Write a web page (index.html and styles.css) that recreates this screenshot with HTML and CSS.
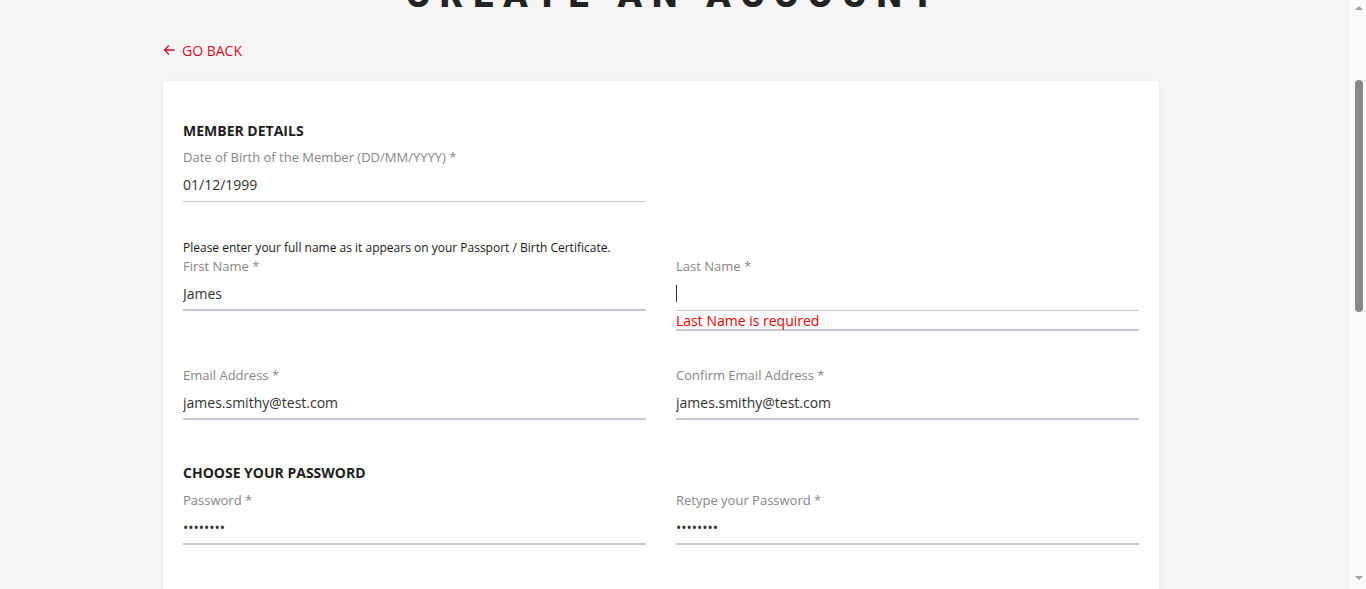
FILE: index.html
```html
<!DOCTYPE html>
<html lang="en">
<head>
<meta charset="utf-8">
<title>Create an Account</title>
<link rel="stylesheet" href="styles.css">
</head>
<body>
<div class="viewport">
  <main class="page">
    <div class="inner">
      <h1 class="title">CREATE AN ACCOUNT</h1>
      <a class="back" href="#">
        <svg class="back-icon" width="12" height="10" viewBox="0 0 12 10" aria-hidden="true">
          <path d="M11 5H1.5M5.5 1L1.5 5l4 4" fill="none" stroke="currentColor" stroke-width="1.4" stroke-linecap="round" stroke-linejoin="round"/>
        </svg>
        <span>GO BACK</span>
      </a>
      <section class="card">
        <h2 class="section-title">MEMBER DETAILS</h2>
        <div class="row">
          <div class="field">
            <label class="label">Date of Birth of the Member (DD/MM/YYYY) *</label>
            <input class="input input-thin" type="text" value="01/12/1999">
          </div>
          <div></div>
        </div>

        <p class="note">Please enter your full name as it appears on your Passport / Birth Certificate.</p>
        <div class="row">
          <div class="field">
            <label class="label">First Name *</label>
            <input class="input" type="text" value="James">
          </div>
          <div class="field">
            <label class="label">Last Name *</label>
            <div class="input input-error"><span class="caret"></span></div>
            <div class="error">Last Name is required</div>
          </div>
        </div>

        <div class="row row-email">
          <div class="field">
            <label class="label">Email Address *</label>
            <input class="input" type="text" value="james.smithy@test.com">
          </div>
          <div class="field">
            <label class="label">Confirm Email Address *</label>
            <input class="input" type="text" value="james.smithy@test.com">
          </div>
        </div>

        <h2 class="section-title section-password">CHOOSE YOUR PASSWORD</h2>
        <div class="row row-password">
          <div class="field">
            <label class="label">Password *</label>
            <input class="input" type="password" value="password">
          </div>
          <div class="field">
            <label class="label">Retype your Password *</label>
            <input class="input" type="password" value="password">
          </div>
        </div>
        <div class="card-rest"></div>
      </section>
    </div>
  </main>
  <div class="scrollbar" aria-hidden="true">
    <div class="sb-arrow sb-up"></div>
    <div class="sb-track"><div class="sb-thumb"></div></div>
    <div class="sb-arrow sb-down"></div>
  </div>
</div>
</body>
</html>
```
FILE: styles.css
```css
html, body {
  margin: 0;
  padding: 0;
  height: 100%;
  overflow: hidden;
}
body {
  background: #f5f5f5;
  font-family: "Open Sans", "Noto Sans", sans-serif;
  color: #333;
}
.viewport {
  display: flex;
  height: 589px;
}
.page {
  flex: 1;
  min-width: 0;
}
.inner {
  width: 1024px;
  margin-left: 163px;
}
.title {
  margin: -25px 0 0;
  font-family: "Roboto", "Liberation Sans", sans-serif;
  font-weight: 900;
  font-size: 36px;
  line-height: 40px;
  letter-spacing: 10px;
  text-align: center;
  color: #222;
}
.back {
  display: flex;
  align-items: center;
  gap: 7px;
  margin-top: 25px;
  height: 20px;
  color: #d50f25;
  font-size: 14px;
  text-decoration: none;
  width: max-content;
}
.back-icon { display: block; }
.card {
  margin-top: 21px;
  width: 996px;
  background: #fff;
  border-radius: 3px;
  box-shadow: 0 0 3px rgba(0,0,0,0.06);
  padding: 40px 20px 0;
  box-sizing: border-box;
}
.section-title {
  margin: 0;
  font-size: 14px;
  line-height: 20px;
  font-weight: 700;
  color: #1e1e1e;
}
.row {
  display: grid;
  grid-template-columns: 463px 463px;
  column-gap: 30px;
  align-items: start;
}
.field {
  display: flex;
  flex-direction: column;
}
.section-title + .row { margin-top: 7px; }
.section-title + .row-password { margin-top: 8px; }
.label {
  font-size: 13px;
  line-height: 18px;
  color: #878787;
}
.input {
  display: block;
  box-sizing: border-box;
  width: 100%;
  height: 36px;
  margin: 0;
  padding: 2px 0 0;
  border: 0;
  border-bottom: 2px solid #c4c9d3;
  outline: none;
  background: transparent;
  font-family: "Open Sans", "Noto Sans", sans-serif;
  font-size: 14px;
  color: #333;
}
.input-thin {
  padding-top: 2px;
  border-bottom-width: 1px;
}
.input-error {
  display: flex;
  align-items: center;
  border-bottom: 1px solid #c4c9d3;
  padding-top: 2px;
}
.caret {
  display: block;
  width: 1px;
  height: 17px;
  background: #333;
}
.error {
  font-size: 14px;
  line-height: 17px;
  padding-top: 1px;
  color: #f00000;
  border-bottom: 2px solid #c4c9d3;
}
.note {
  margin: 38px 0 1px;
  font-size: 12px;
  line-height: 16px;
  color: #1a1a1a;
}
.row-email { margin-top: 35px; }
.section-password { margin-top: 43px; }
.card-rest { height: 120px; }

.scrollbar {
  width: 15px;
  flex: 0 0 15px;
  background: #fafafa;
  display: flex;
  flex-direction: column;
  align-items: center;
}
.sb-arrow {
  width: 0;
  height: 0;
  border-left: 4px solid transparent;
  border-right: 4px solid transparent;
}
.sb-up {
  margin-top: 6px;
  border-bottom: 4px solid #a3a3a3;
}
.sb-down {
  margin-bottom: 9px;
  border-top: 4px solid #a3a3a3;
}
.sb-track {
  flex: 1;
  width: 100%;
  display: flex;
  justify-content: center;
}
.sb-thumb {
  margin-top: 70px;
  width: 8px;
  height: 232px;
  border-radius: 4px;
  background: #8a8a8a;
}
```
